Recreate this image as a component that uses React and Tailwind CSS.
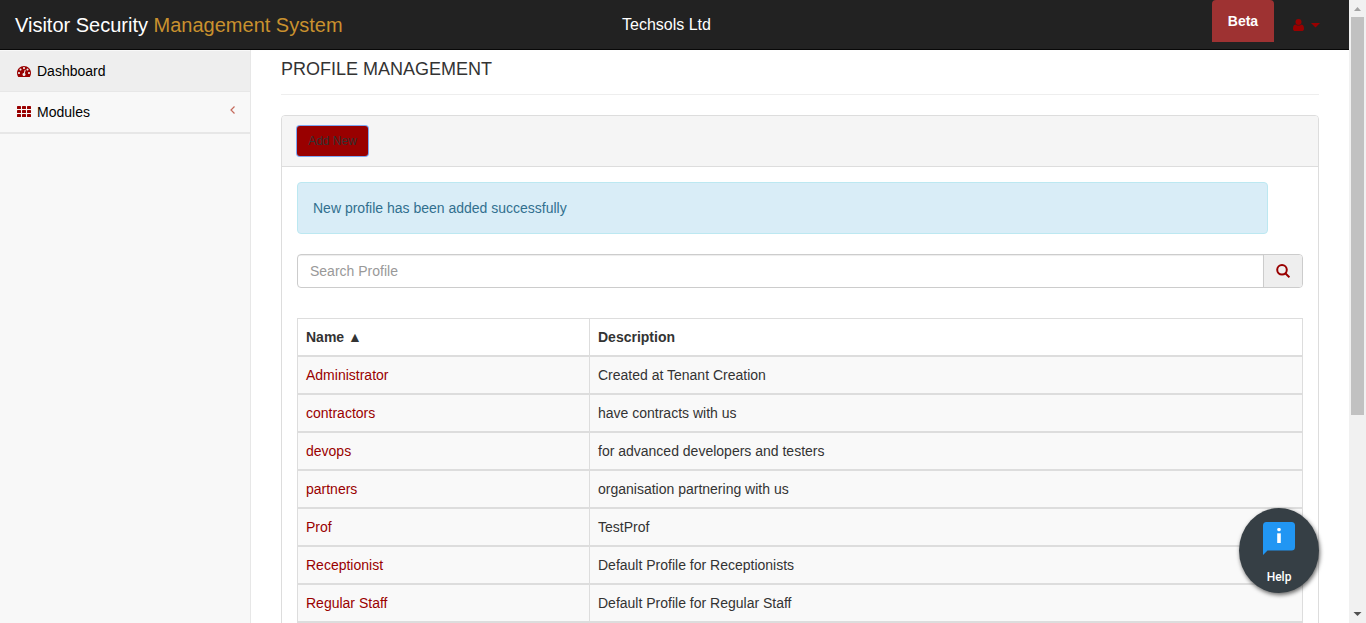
import React from 'react';

const profiles = [
  ['Administrator', 'Created at Tenant Creation'],
  ['contractors', 'have contracts with us'],
  ['devops', 'for advanced developers and testers'],
  ['partners', 'organisation partnering with us'],
  ['Prof', 'TestProf'],
  ['Receptionist', 'Default Profile for Receptionists'],
  ['Regular Staff', 'Default Profile for Regular Staff'],
];

function DashboardIcon() {
  return (
    <svg viewBox="0 0 1792 1792" className="size-[14px] fill-[#990000]">
      <path d="M384 1152q0-53-37.5-90.5t-90.5-37.5-90.5 37.5-37.5 90.5 37.5 90.5 90.5 37.5 90.5-37.5 37.5-90.5zm192-448q0-53-37.5-90.5t-90.5-37.5-90.5 37.5-37.5 90.5 37.5 90.5 90.5 37.5 90.5-37.5 37.5-90.5zm428 481l101-382q6-26-7.5-48.5t-38.5-29.5-48 6.5-30 39.5l-101 382q-60 5-107 43.5t-63 98.5q-20 77 20 146t117 89 146-20 89-117q16-60-6-117t-72-91zm660-33q0-53-37.5-90.5t-90.5-37.5-90.5 37.5-37.5 90.5 37.5 90.5 90.5 37.5 90.5-37.5 37.5-90.5zm-640-640q0-53-37.5-90.5t-90.5-37.5-90.5 37.5-37.5 90.5 37.5 90.5 90.5 37.5 90.5-37.5 37.5-90.5zm448 192q0-53-37.5-90.5t-90.5-37.5-90.5 37.5-37.5 90.5 37.5 90.5 90.5 37.5 90.5-37.5 37.5-90.5zm320 448q0 261-141 483-19 29-54 29h-1402q-35 0-54-29-141-221-141-483 0-182 71-348t191-286 286-191 348-71 348 71 286 191 191 286 71 348z" />
    </svg>
  );
}

function GridIcon() {
  return (
    <svg viewBox="0 0 14 11" className="mb-px h-[11px] w-[14px] fill-[#990000]">
      {[0, 4, 8].map((y) =>
        [0, 5, 10].map((x) => <rect key={`${x}-${y}`} x={x} y={y} width="4" height="3" rx="0.6" />)
      )}
    </svg>
  );
}

function Header() {
  return (
    <header className="flex h-[50px] shrink-0 border-b border-[#080808] bg-[#222222]">
      <div className="w-[607px] pt-[10px] pl-[15px] text-[20px] leading-[30px] whitespace-nowrap text-white">
        Visitor Security <span className="text-[#c9912e]">Management System</span>
      </div>
      <div className="w-[605px] pt-[13px] pl-[15px] text-[16px] leading-6 text-white">Techsols Ltd</div>
      <div className="flex h-[42px] w-[62px] items-center justify-center rounded-t bg-[#9e3232] text-[14px] font-bold text-white">
        Beta
      </div>
      <div className="flex pt-[19px] pl-[19px]">
        <svg viewBox="0 0 11 12" className="h-3 w-[11px] fill-[#990000]">
          <circle cx="5.5" cy="3" r="3" />
          <path d="M2.4 5.4C.7 5.6 0 7.4 0 9.7 0 11.2 1 12 2.2 12h6.6c1.2 0 2.2-.8 2.2-2.3 0-2.3-.7-4.1-2.4-4.3-.8.7-1.8 1.2-3.1 1.2s-2.3-.5-3.1-1.2z" />
        </svg>
        <svg viewBox="0 0 9 5" className="mt-1 ml-[7px] h-[5px] w-[9px] fill-[#990000]">
          <path d="M0 0h9L4.500 4.600z" />
        </svg>
      </div>
    </header>
  );
}

function Sidebar() {
  return (
    <nav className="w-[251px] shrink-0 border-r border-[#e7e7e7] bg-[#f8f8f8] pt-px text-[14px] leading-5 text-black">
      <a className="flex h-[41px] items-center gap-[6px] border-b border-[#e7e7e7] bg-[#eeeeee] pl-[17px]">
        <DashboardIcon />
        Dashboard
      </a>
      <a className="flex h-[42px] items-center gap-[6px] border-b-2 border-[#e7e7e7] pr-[15px] pl-[17px]">
        <GridIcon />
        Modules
        <svg viewBox="0 0 5 8" className="mb-[5px] ml-auto h-2 w-[5px] fill-none stroke-[#c46a5c]">
          <path d="M4.500.5L1 4l3.500 3.500" strokeWidth="1.2" />
        </svg>
      </a>
    </nav>
  );
}

function ProfileTable() {
  return (
    <div className="mt-[30px] border border-[#dddddd] text-[14px] leading-5">
      <div className="flex h-[37px] border-b border-[#dddddd] font-bold">
        <div className="w-[292px] border-r border-[#dddddd] py-2 pl-2">Name ▲</div>
        <div className="py-2 pl-2">Description</div>
      </div>
      {profiles.map(([name, description]) => (
        <div key={name} className="flex h-[38px] border-y border-[#dddddd] bg-[#f9f9f9]">
          <div className="w-[292px] border-r border-[#dddddd] py-2 pl-2 text-[#990000]">{name}</div>
          <div className="py-2 pl-2">{description}</div>
        </div>
      ))}
    </div>
  );
}

function Main() {
  return (
    <main className="min-w-0 flex-1 px-[30px]">
      <h1 className="h-[45px] border-b border-[#eeeeee] pt-[9px] text-[18px] leading-5">PROFILE MANAGEMENT</h1>
      <section className="mt-5 h-[700px] overflow-hidden rounded border border-[#dddddd]">
        <div className="h-[51px] border-b border-[#dddddd] bg-[#f5f5f5] pt-[10px] pl-[15px]">
          <button className="block h-[30px] w-[71px] rounded-[3px] bg-[#990000] text-[12px] text-[#333333] ring-1 ring-[#7ba6f2]">
            Add New
          </button>
        </div>
        <div className="px-[15px] pt-[15px]">
          <div className="mr-[35px] h-[52px] rounded border border-[#bce8f1] bg-[#d9edf7] py-[15px] pl-[15px] text-[14px] leading-5 text-[#31708f]">
            New profile has been added successfully
          </div>
          <div className="mt-5 flex h-[34px] overflow-hidden rounded border border-[#cccccc] text-[14px]">
            <div className="flex-1 pt-[6px] pl-3 leading-5 text-[#999999] shadow-[inset_0_1px_1px_rgba(0,0,0,0.075)]">
              Search Profile
            </div>
            <div className="flex w-[39px] items-center justify-center border-l border-[#cccccc] bg-[#eeeeee]">
              <svg viewBox="0 0 14 14" className="size-[14px] fill-none stroke-[#990000] stroke-2">
                <circle cx="6" cy="5.8" r="4.8" />
                <path d="M9.300 9.200l4.100 4.100" />
              </svg>
            </div>
          </div>
          <ProfileTable />
        </div>
      </section>
    </main>
  );
}

function Scrollbar() {
  return (
    <div className="flex h-full w-[17px] shrink-0 flex-col items-center bg-[#f1f1f1]">
      <svg viewBox="0 0 17 17" className="size-[17px] fill-[#a3a3a3]">
        <path d="M5 11h7L8.500 7z" />
      </svg>
      <div className="h-[398px] w-[13px] bg-[#c1c1c1]" />
      <svg viewBox="0 0 17 17" className="mt-auto size-[17px] fill-[#505050]">
        <path d="M4.500 6h8l-4 4z" />
      </svg>
    </div>
  );
}

function HelpButton() {
  return (
    <div className="absolute top-[508px] left-[1239px] flex h-[85px] w-20 flex-col items-center rounded-[50%] bg-[#363f45] pt-[14px] shadow-[1px_2px_4px_rgba(0,0,0,0.6)]">
      <svg viewBox="0 0 32 33" className="h-[33px] w-8">
        <path d="M3.500 0h25Q32 0 32 3.500v21.500q0 3.500-3.500 3.500h-24L0 33V3.500Q0 0 3.500 0z" fill="#2196f3" />
        <rect x="14.200" y="6" width="3.600" height="3.200" rx="1.400" fill="#fff" />
        <rect x="14.200" y="11.300" width="3.600" height="9.700" fill="#fff" />
      </svg>
      <span className="mt-[14px] font-[Roboto,sans-serif] text-[12px] leading-4 font-medium text-white">Help</span>
    </div>
  );
}

export default function App() {
  return (
    <div className="relative flex h-[623px] w-[1366px] overflow-hidden bg-white font-['Liberation_Sans',Arial,sans-serif] text-[#333333]">
      <div className="flex h-full min-w-0 flex-1 flex-col">
        <Header />
        <div className="flex min-h-0 flex-1">
          <Sidebar />
          <Main />
        </div>
      </div>
      <Scrollbar />
      <HelpButton />
    </div>
  );
}
